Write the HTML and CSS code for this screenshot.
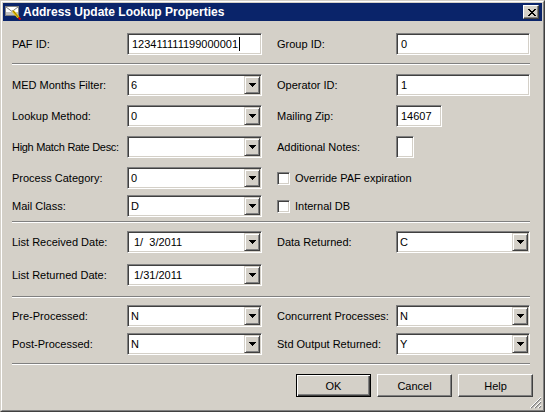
FILE: index.html
```html
<!DOCTYPE html>
<html>
<head>
<meta charset="utf-8">
<link rel="stylesheet" href="styles.css">
</head>
<body>
<div class="window">
  <div class="frame">
    <div class="titlebar">
      <svg class="ticon" width="16" height="16" viewBox="0 0 16 16">
        <rect x="0.5" y="2.5" width="13" height="9" fill="#fff" stroke="#808080"/>
        <path d="M1 3 L7 7.5 L13 3" stroke="#808080" fill="none"/>
        <rect x="1" y="8" width="12" height="3" fill="#c0c0c0"/>
        <path d="M8 7 L13.5 13.5" stroke="#f0c800" stroke-width="2.6"/>
        <path d="M7.6 6.4 L13.4 13.2" stroke="#806000" stroke-width="0.8"/>
        <path d="M13.6 13.6 L15.5 15.5" stroke="#e00000" stroke-width="2"/>
      </svg>
      <span class="ttext">Address Update Lookup Properties</span>
      <div class="closebtn">
        <svg width="8" height="7" viewBox="0 0 8 7"><path d="M0 0h2v1h-2zM6 0h2v1h-2zM1 1h2v1h-2zM5 1h2v1h-2zM2 2h4v1h-4zM3 3h2v1h-2zM2 4h4v1h-4zM1 5h2v1h-2zM5 5h2v1h-2zM0 6h2v1h-2zM6 6h2v1h-2z" fill="#000"/></svg>
      </div>
    </div>
    <div class="client">
      <div class="row r1">
        <span class="lbl">PAF ID:</span>
        <div class="edit"><span>123411111199000001</span><span class="caret"></span></div>
        <span class="lbl lbl-r">Group ID:</span>
        <div class="edit"><span>0</span></div>
      </div>
      <div class="sep s1"></div>
      <div class="row r2">
        <span class="lbl">MED Months Filter:</span>
        <div class="combo"><span class="ctext">6</span><span class="drop"><svg width="7" height="4" viewBox="0 0 7 4"><path d="M0 0h7v1h-7zM1 1h5v1h-5zM2 2h3v1h-3zM3 3h1v1h-1z" fill="#000"/></svg></span></div>
        <span class="lbl lbl-r">Operator ID:</span>
        <div class="edit"><span>1</span></div>
      </div>
      <div class="row r3">
        <span class="lbl">Lookup Method:</span>
        <div class="combo"><span class="ctext">0</span><span class="drop"><svg width="7" height="4" viewBox="0 0 7 4"><path d="M0 0h7v1h-7zM1 1h5v1h-5zM2 2h3v1h-3zM3 3h1v1h-1z" fill="#000"/></svg></span></div>
        <span class="lbl lbl-r">Mailing Zip:</span>
        <div class="edit zip"><span>14607</span></div>
      </div>
      <div class="row r3">
        <span class="lbl tight">High Match Rate Desc:</span>
        <div class="combo"><span class="ctext"></span><span class="drop"><svg width="7" height="4" viewBox="0 0 7 4"><path d="M0 0h7v1h-7zM1 1h5v1h-5zM2 2h3v1h-3zM3 3h1v1h-1z" fill="#000"/></svg></span></div>
        <span class="lbl lbl-r">Additional Notes:</span>
        <div class="edit notes"></div>
      </div>
      <div class="row r3">
        <span class="lbl">Process Category:</span>
        <div class="combo"><span class="ctext">0</span><span class="drop"><svg width="7" height="4" viewBox="0 0 7 4"><path d="M0 0h7v1h-7zM1 1h5v1h-5zM2 2h3v1h-3zM3 3h1v1h-1z" fill="#000"/></svg></span></div>
        <label class="check"><span class="box"></span><span>Override PAF expiration</span></label>
      </div>
      <div class="row r4">
        <span class="lbl">Mail Class:</span>
        <div class="combo"><span class="ctext">D</span><span class="drop"><svg width="7" height="4" viewBox="0 0 7 4"><path d="M0 0h7v1h-7zM1 1h5v1h-5zM2 2h3v1h-3zM3 3h1v1h-1z" fill="#000"/></svg></span></div>
        <label class="check"><span class="box"></span><span>Internal DB</span></label>
      </div>
      <div class="sep s2"></div>
      <div class="row r5">
        <span class="lbl">List Received Date:</span>
        <div class="combo date"><span class="ctext">1/&nbsp;&nbsp;3/2011</span><span class="drop"><svg width="7" height="4" viewBox="0 0 7 4"><path d="M0 0h7v1h-7zM1 1h5v1h-5zM2 2h3v1h-3zM3 3h1v1h-1z" fill="#000"/></svg></span></div>
        <span class="lbl lbl-r">Data Returned:</span>
        <div class="combo"><span class="ctext">C</span><span class="drop"><svg width="7" height="4" viewBox="0 0 7 4"><path d="M0 0h7v1h-7zM1 1h5v1h-5zM2 2h3v1h-3zM3 3h1v1h-1z" fill="#000"/></svg></span></div>
      </div>
      <div class="row r6">
        <span class="lbl">List Returned Date:</span>
        <div class="combo date"><span class="ctext">1/31/2011</span><span class="drop"><svg width="7" height="4" viewBox="0 0 7 4"><path d="M0 0h7v1h-7zM1 1h5v1h-5zM2 2h3v1h-3zM3 3h1v1h-1z" fill="#000"/></svg></span></div>
      </div>
      <div class="sep s3"></div>
      <div class="row r7">
        <span class="lbl">Pre-Processed:</span>
        <div class="combo"><span class="ctext">N</span><span class="drop"><svg width="7" height="4" viewBox="0 0 7 4"><path d="M0 0h7v1h-7zM1 1h5v1h-5zM2 2h3v1h-3zM3 3h1v1h-1z" fill="#000"/></svg></span></div>
        <span class="lbl lbl-r">Concurrent Processes:</span>
        <div class="combo"><span class="ctext">N</span><span class="drop"><svg width="7" height="4" viewBox="0 0 7 4"><path d="M0 0h7v1h-7zM1 1h5v1h-5zM2 2h3v1h-3zM3 3h1v1h-1z" fill="#000"/></svg></span></div>
      </div>
      <div class="row r8">
        <span class="lbl">Post-Processed:</span>
        <div class="combo"><span class="ctext">N</span><span class="drop"><svg width="7" height="4" viewBox="0 0 7 4"><path d="M0 0h7v1h-7zM1 1h5v1h-5zM2 2h3v1h-3zM3 3h1v1h-1z" fill="#000"/></svg></span></div>
        <span class="lbl lbl-r">Std Output Returned:</span>
        <div class="combo"><span class="ctext">Y</span><span class="drop"><svg width="7" height="4" viewBox="0 0 7 4"><path d="M0 0h7v1h-7zM1 1h5v1h-5zM2 2h3v1h-3zM3 3h1v1h-1z" fill="#000"/></svg></span></div>
      </div>
      <div class="sep s4"></div>
      <div class="buttons">
        <button class="btn default">OK</button>
        <button class="btn">Cancel</button>
        <button class="btn">Help</button>
      </div>
      <svg class="grip" width="12" height="12" viewBox="0 0 12 12">
        <path d="M11 1 L1 11 M11 5 L5 11 M11 9 L9 11" stroke="#808080" stroke-width="1.2"/>
        <path d="M11 0 L0 11 M11 4 L4 11 M11 8 L8 11" stroke="#fff" stroke-width="1"/>
      </svg>
    </div>
  </div>
</div>
</body>
</html>
```
FILE: styles.css
```css
html, body {
  margin: 0;
  padding: 0;
  background: #d4d0c8;
}
body {
  font-family: "Liberation Sans", Arial, sans-serif;
  font-size: 11px;
  color: #000;
}
.window {
  width: 545px;
  height: 412px;
  box-sizing: border-box;
  background: #d4d0c8;
  border: 1px solid;
  border-color: #d4d0c8 #404040 #404040 #d4d0c8;
}
.frame {
  height: 100%;
  box-sizing: border-box;
  border: 1px solid;
  border-color: #fff #808080 #808080 #fff;
  padding: 1px;
  display: flex;
  flex-direction: column;
}
.titlebar {
  height: 18px;
  flex: none;
  background: #0a246a;
  color: #fff;
  font-weight: bold;
  font-size: 12px;
  display: flex;
  align-items: center;
  padding: 0 2px 0 2px;
}
.ticon {
  flex: none;
  margin-right: 2px;
}
.ttext {
  white-space: nowrap;
}
.closebtn {
  margin-left: auto;
  margin-right: 1px;
  width: 16px;
  height: 14px;
  box-sizing: border-box;
  background: #d4d0c8;
  border: 1px solid;
  border-color: #fff #404040 #404040 #fff;
  box-shadow: inset -1px -1px #808080;
  display: flex;
  align-items: center;
  justify-content: center;
  padding-left: 1px;
}
.client {
  flex: 1;
  position: relative;
  padding: 0 10px 0 9px;
  display: flex;
  flex-direction: column;
}
.row {
  display: grid;
  grid-template-columns: 115px 135px 134px 134px;
  height: 22px;
  align-items: center;
  flex: none;
}
.r1 { margin-top: 12px; }
.r2 { margin-top: 9px; }
.r3 { margin-top: 9px; }
.r4 { margin-top: 6px; }
.r5 { margin-top: 8px; }
.r6 { margin-top: 11px; }
.r7 { margin-top: 7px; }
.r8 { margin-top: 6px; }
.lbl {
  white-space: nowrap;
}
.tight {
  letter-spacing: -0.3px;
}
.lbl-r {
  padding-left: 15px;
}
.sep {
  width: 518px;
  height: 0;
  border-top: 1px solid #808080;
  border-bottom: 1px solid #fff;
  flex: none;
}
.s1 { margin-top: 8px; }
.s2 { margin-top: 4px; }
.s3 { margin-top: 10px; }
.s4 { margin-top: 8px; }
.edit, .combo {
  height: 22px;
  box-sizing: border-box;
  background: #fff;
  border: 1px solid;
  border-color: #808080 #fff #fff #808080;
  box-shadow: inset 1px 1px #404040, inset -1px -1px #d4d0c8;
  display: flex;
  align-items: center;
  white-space: nowrap;
}
.edit {
  padding: 0 3px 0 4px;
}
.caret {
  width: 1px;
  height: 14px;
  background: #000;
  margin-left: 1px;
}
.zip {
  width: 46px;
}
.notes {
  width: 18px;
}
.combo {
  padding: 1px;
}
.ctext {
  flex: 1;
  padding-left: 2px;
}
.date .ctext {
  padding-left: 5px;
}
.drop {
  width: 16px;
  align-self: stretch;
  box-sizing: border-box;
  background: #d4d0c8;
  border: 1px solid;
  border-color: #d4d0c8 #404040 #404040 #d4d0c8;
  box-shadow: inset 1px 1px #fff, inset -1px -1px #808080;
  display: flex;
  align-items: center;
  justify-content: center;
  padding-left: 1px;
}
.check {
  grid-column: 3 / span 2;
  padding-left: 15px;
  display: flex;
  align-items: center;
  gap: 5px;
}
.box {
  width: 13px;
  height: 13px;
  box-sizing: border-box;
  background: #fff;
  border: 1px solid;
  border-color: #808080 #fff #fff #808080;
  box-shadow: inset 1px 1px #404040, inset -1px -1px #d4d0c8;
}
.buttons {
  display: flex;
  justify-content: flex-end;
  gap: 6px;
  margin-top: 9px;
  margin-right: -1px;
  flex: none;
}
.btn {
  width: 75px;
  height: 23px;
  box-sizing: border-box;
  background: #d4d0c8;
  border: 1px solid;
  border-color: #fff #404040 #404040 #fff;
  box-shadow: inset -1px -1px #808080;
  font-family: "Liberation Sans", Arial, sans-serif;
  font-size: 11px;
  color: #000;
  padding: 0;
}
.btn.default {
  border-color: #000;
  box-shadow: inset 1px 1px #fff, inset -1px -1px #404040, inset -2px -2px #808080;
}
.grip {
  position: absolute;
  right: 0;
  bottom: 0;
}
```
